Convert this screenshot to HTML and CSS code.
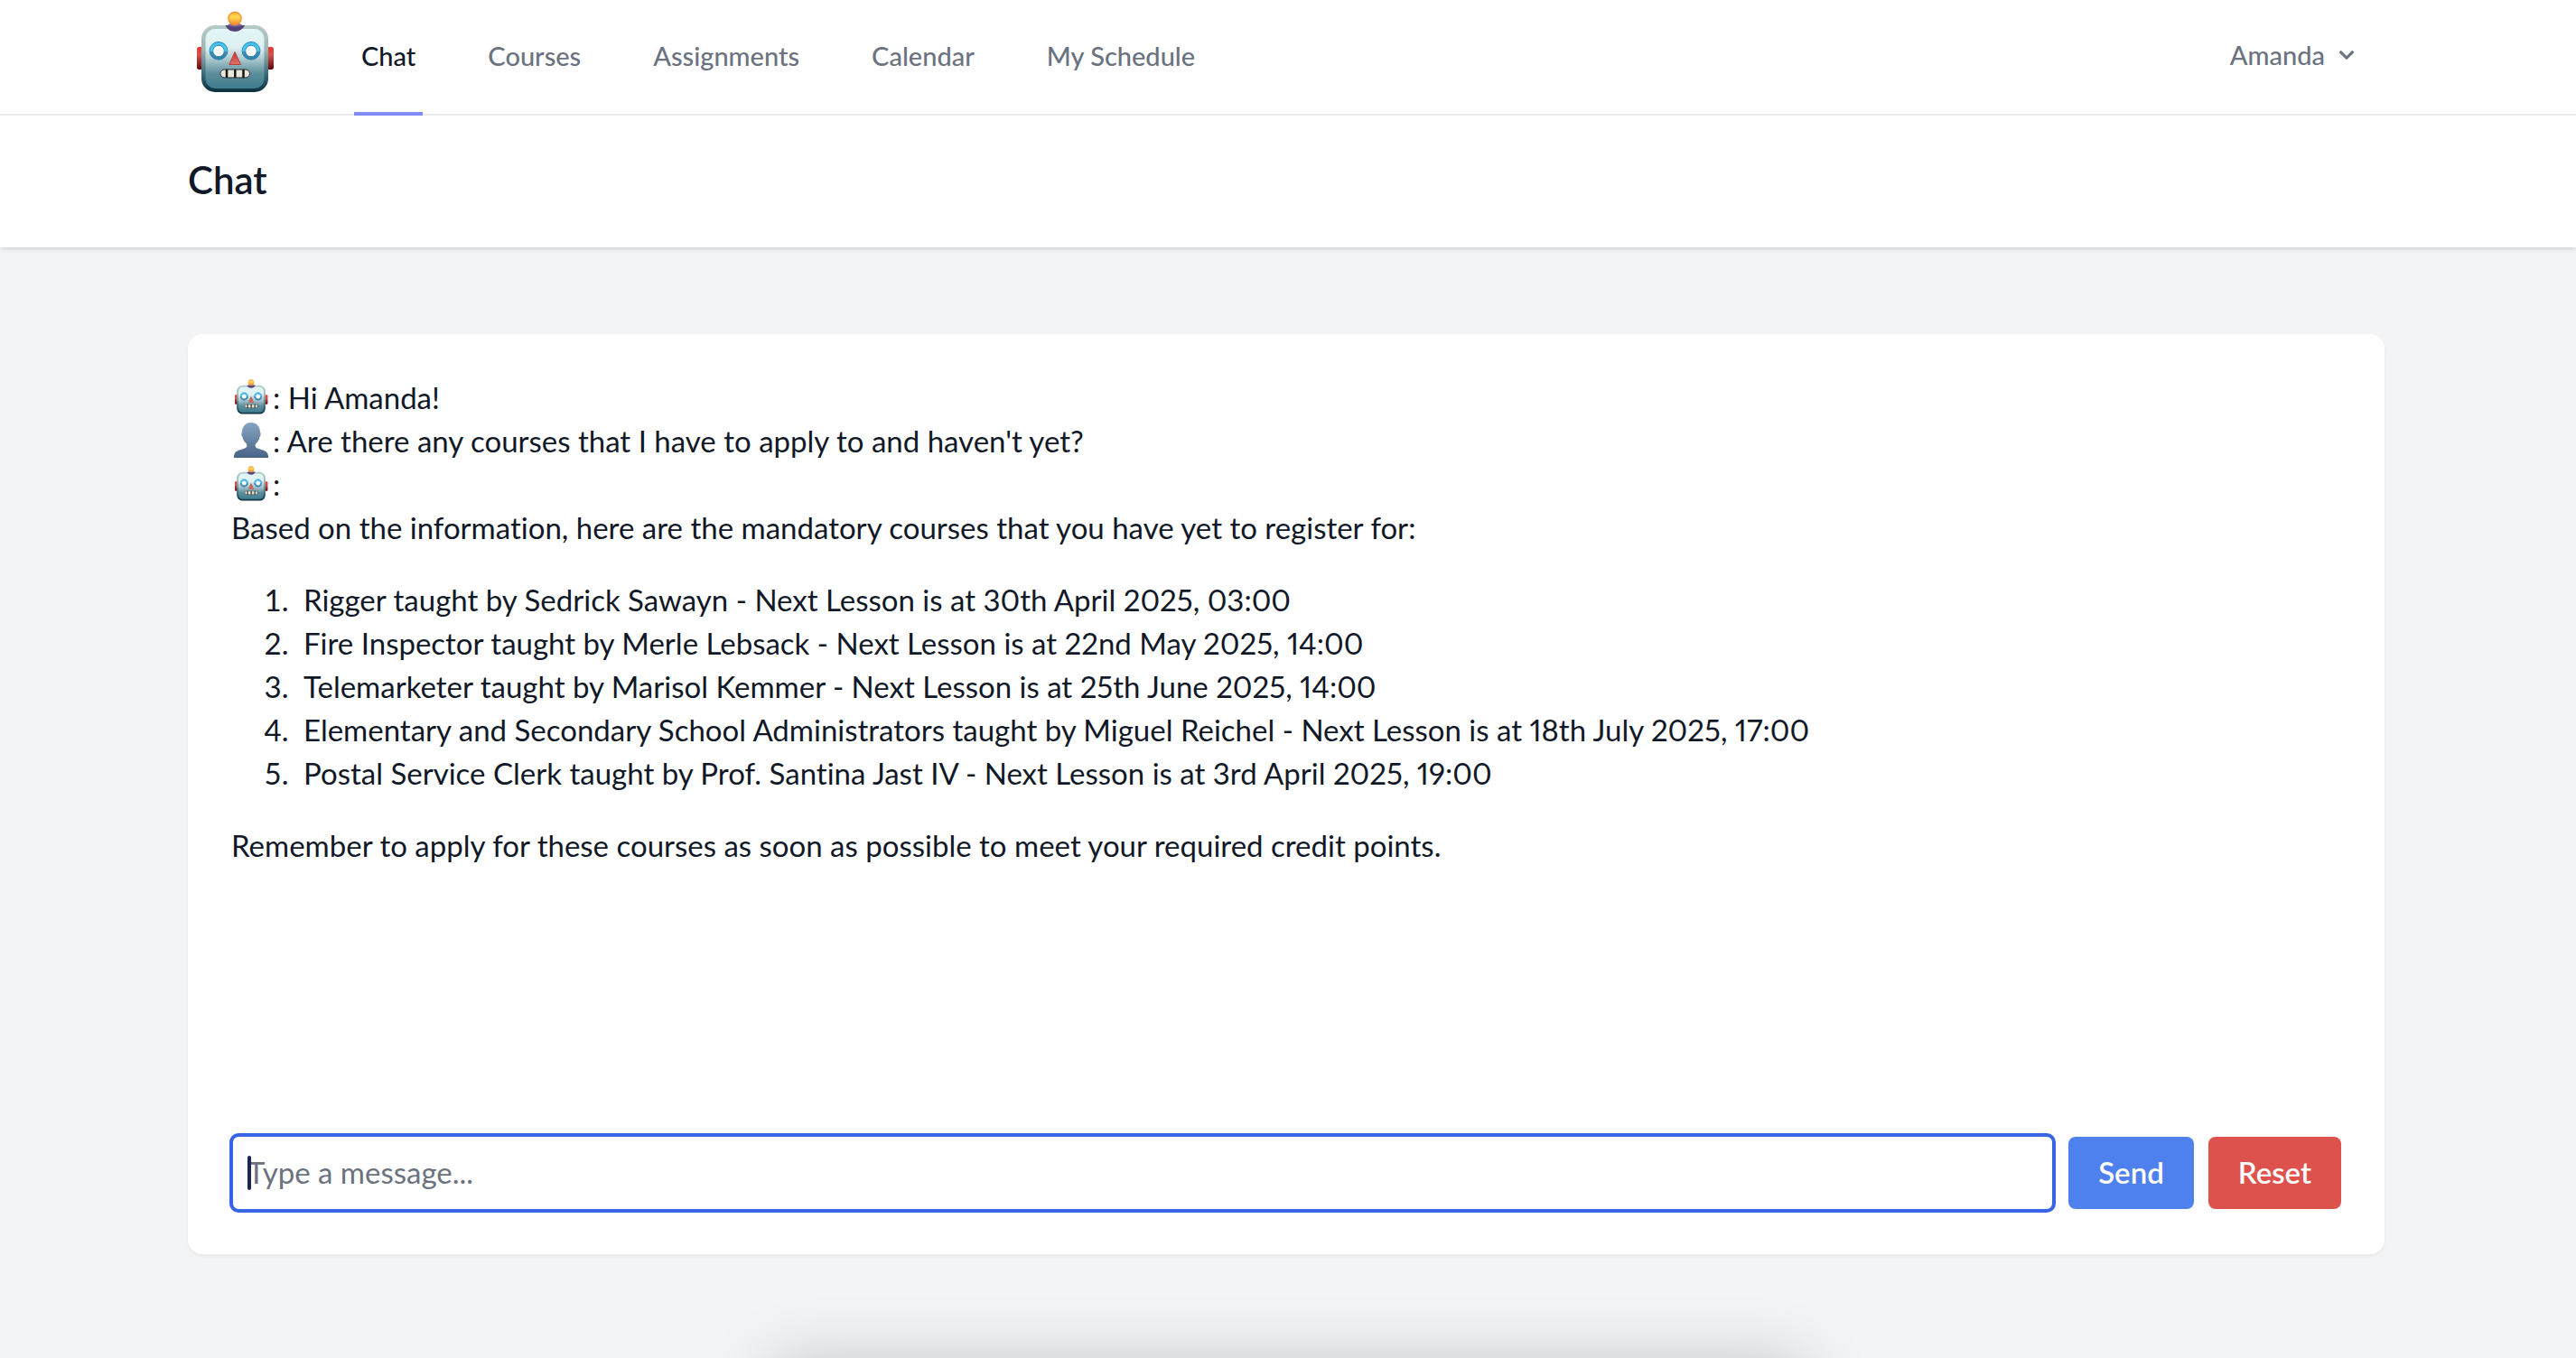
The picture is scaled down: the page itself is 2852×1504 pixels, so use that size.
FILE: index.html
```html
<!DOCTYPE html>
<html lang="en">
<head>
<meta charset="utf-8">
<meta name="viewport" content="width=device-width, initial-scale=1">
<title>Chat</title>
<link rel="stylesheet" href="styles.css">
</head>
<body>
<svg class="sprite" aria-hidden="true">
  <defs>
    <linearGradient id="face" x1="0" y1="0" x2="0" y2="1">
      <stop offset="0" stop-color="#e2f6f7"/><stop offset=".3" stop-color="#dff0f2"/><stop offset=".48" stop-color="#b4cfd4"/><stop offset=".75" stop-color="#5b8d9a"/><stop offset="1" stop-color="#3e7d8f"/>
    </linearGradient>
    <linearGradient id="rim" x1="0" y1="0" x2="0" y2="1">
      <stop offset="0" stop-color="#b5cbc6"/><stop offset=".35" stop-color="#9db7b5"/><stop offset=".7" stop-color="#3f6f7d"/><stop offset="1" stop-color="#0c303e"/>
    </linearGradient>
    <linearGradient id="ear" x1="0" y1="0" x2="0" y2="1">
      <stop offset="0" stop-color="#e8372f"/><stop offset=".35" stop-color="#d4534b"/><stop offset="1" stop-color="#5d0808"/>
    </linearGradient>
    <linearGradient id="ball" x1="0" y1="0" x2="0" y2="1">
      <stop offset="0" stop-color="#fbb03a"/><stop offset=".4" stop-color="#ffd84f"/><stop offset="1" stop-color="#f4852b"/>
    </linearGradient>
    <linearGradient id="eye" x1="0" y1="0" x2="0" y2="1">
      <stop offset="0" stop-color="#3dbdf0"/><stop offset=".5" stop-color="#4fd2f5"/><stop offset=".55" stop-color="#3f8fb2"/><stop offset="1" stop-color="#2d7fa6"/>
    </linearGradient>
    <linearGradient id="nose" x1="0" y1="0" x2="0" y2="1">
      <stop offset="0" stop-color="#d9322c"/><stop offset="1" stop-color="#d8736c"/>
    </linearGradient>
    <linearGradient id="person" x1="0" y1="0" x2="0" y2="1">
      <stop offset="0" stop-color="#86a5c2"/><stop offset="1" stop-color="#486386"/>
    </linearGradient>
  </defs>
  <symbol id="robot" viewBox="26 12 86 91">
    <rect x="27" y="52" width="8" height="25" rx="2.5" fill="url(#ear)"/>
    <rect x="104" y="52" width="8" height="25" rx="2.5" fill="url(#ear)"/>
    <rect x="32" y="28" width="74" height="74" rx="15" fill="url(#rim)"/>
    <rect x="36.500" y="32" width="65" height="66" rx="11" fill="url(#face)"/>
    <path d="M58.500 28 L80 28 C78 32 74 35 69 35 C64 35 60 32 58.500 28Z" fill="#54417a"/>
    <path d="M61 28 C63 25 75 25 77.500 28 C74 30 64 30 61 28Z" fill="#7b66a0"/>
    <circle cx="69" cy="20.500" r="7.200" fill="url(#ball)" stroke="#f08c2c" stroke-width="1.200"/>
    <g stroke="#2f86b2" stroke-width="1">
      <circle cx="51" cy="56.300" r="9.900" fill="url(#eye)"/>
      <circle cx="87" cy="56.300" r="9.900" fill="url(#eye)"/>
      <circle cx="51" cy="56.500" r="6.300" fill="#fff"/>
      <circle cx="87" cy="56.500" r="6.300" fill="#fff"/>
    </g>
    <path d="M69 57.500 L62.800 71.500 H75.600Z" fill="url(#nose)" stroke="#b5413d" stroke-width="1" stroke-linejoin="round"/>
    <rect x="53" y="77" width="32.500" height="9" rx="4.500" fill="#e9e6da" stroke="#2a2c2c" stroke-width="1"/>
    <path d="M60 77v9M69.300 77v9M78.500 77v9" stroke="#151515" stroke-width="2.500"/>
  </symbol>
  <symbol id="user" viewBox="0 0 118 118">
    <path d="M59 0C78 0 89 13 89 31C92 33 92 44 88 48C86 60 80 67 74 72C71 80 74 84 80 86L103 94C113 98 117 106 117 118H1C1 106 5 98 15 94L38 86C44 84 47 80 44 72C38 67 32 60 30 48C26 44 26 33 29 31C29 13 40 0 59 0Z" fill="url(#person)"/>
  </symbol>
</svg>

<nav class="nav" aria-label="Main">
  <div class="container nav-row">
    <a class="logo" href="#" aria-label="Home"><svg class="logo-icon" aria-hidden="true"><use href="#robot"/></svg></a>
    <div class="nav-links">
      <a class="nav-link active" href="#" aria-current="page">Chat</a>
      <a class="nav-link" href="#">Courses</a>
      <a class="nav-link" href="#">Assignments</a>
      <a class="nav-link" href="#">Calendar</a>
      <a class="nav-link" href="#">My Schedule</a>
    </div>
    <button class="account" type="button" aria-haspopup="true">Amanda
      <svg class="chevron" viewBox="0 0 20 20" fill="currentColor" aria-hidden="true"><path fill-rule="evenodd" clip-rule="evenodd" d="M5.293 7.293a1 1 0 011.414 0L10 10.586l3.293-3.293a1 1 0 111.414 1.414l-4 4a1 1 0 01-1.414 0l-4-4a1 1 0 010-1.414z"/></svg>
    </button>
  </div>
</nav>

<header class="page-header">
  <div class="container"><h1 class="page-title">Chat</h1></div>
</header>

<main class="main">
  <div class="container">
    <section class="card">
      <div class="messages">
        <p class="message"><svg class="avatar" role="img" aria-label="Robot"><use href="#robot"/></svg>: Hi Amanda!</p>
        <p class="message"><svg class="avatar" role="img" aria-label="User"><use href="#user"/></svg>: Are there any courses that I have to apply to and haven't yet?</p>
        <p class="message"><svg class="avatar" role="img" aria-label="Robot"><use href="#robot"/></svg>:</p>
        <p>Based on the information, here are the mandatory courses that you have yet to register for:</p>
        <ol class="course-list">
          <li>Rigger taught by Sedrick Sawayn - Next Lesson is at 30th April 2025, 03:00</li>
          <li>Fire Inspector taught by Merle Lebsack - Next Lesson is at 22nd May 2025, 14:00</li>
          <li>Telemarketer taught by Marisol Kemmer - Next Lesson is at 25th June 2025, 14:00</li>
          <li>Elementary and Secondary School Administrators taught by Miguel Reichel - Next Lesson is at 18th July 2025, 17:00</li>
          <li>Postal Service Clerk taught by Prof. Santina Jast IV - Next Lesson is at 3rd April 2025, 19:00</li>
        </ol>
        <p>Remember to apply for these courses as soon as possible to meet your required credit points.</p>
      </div>
      <form class="composer">
        <div class="field">
          <input class="message-input" type="text" placeholder="Type a message..." aria-label="Message">
          <span class="caret"></span>
        </div>
        <button class="button send" type="submit">Send</button>
        <button class="button reset" type="reset">Reset</button>
      </form>
    </section>
  </div>
</main>
<div class="dock-shadow"></div>
</body>
</html>
```
FILE: styles.css
```css
*, *::before, *::after { box-sizing: border-box; }

@counter-style spaced-decimal {
  system: extends decimal;
  suffix: ".\2002";
}

body {
  margin: 0;
  min-height: 100vh;
  overflow-x: hidden;
  background: #f3f4f6;
  color: #111827;
  font-family: Lato, "Liberation Sans", sans-serif;
  font-size: 33px;
  font-variant-ligatures: none;
  font-variant-numeric: proportional-nums;
  line-height: 48px;
}

h1, p, ol { margin: 0; }
a { color: inherit; text-decoration: none; }
button, input { font: inherit; }

.sprite { position: absolute; width: 0; height: 0; }

.container {
  max-width: 2560px;
  margin: 0 auto;
  padding: 0 64px;
}

.nav, .page-header, .main { padding-right: 4px; }

.nav {
  background: #fff;
  border-bottom: 2px solid #eeeeef;
}

.nav-row {
  display: flex;
  height: 126px;
}

.logo {
  display: flex;
  width: 104px;
  align-items: center;
  justify-content: center;
  padding-bottom: 12px;
}
.logo-icon { width: 86px; height: 91px; }

.nav-links {
  display: flex;
  gap: 64px;
  margin: 0 auto -2px 80px;
}

.nav-link {
  display: flex;
  align-items: center;
  padding: 0 8px;
  border-bottom: 4px solid transparent;
  color: #6b7280;
  font-size: 29px;
  font-weight: 500;
}
.nav-link.active {
  border-color: #818cf8;
  color: #111827;
}

.account {
  display: flex;
  align-items: center;
  gap: 8px;
  padding: 0 26px 4px;
  border: 0;
  background: none;
  color: #6b7280;
  font-size: 29px;
  font-weight: 500;
}
.chevron { width: 32px; height: 32px; }

.page-header {
  position: relative;
  padding-top: 46px;
  padding-bottom: 50px;
  background: #fff;
  box-shadow: 0 2px 6px rgba(0, 0, 0, .1), 0 2px 4px -2px rgba(0, 0, 0, .1);
}
.page-title {
  font-size: 42px;
  font-weight: 600;
  line-height: 50px;
}

.main { padding-top: 96px; padding-bottom: 96px; }

.card {
  padding: 46px 48px 48px;
  border-radius: 16px;
  background: #fff;
  box-shadow: 0 2px 4px rgba(0, 0, 0, .05);
}

.messages { min-height: 841px; padding-bottom: 32px; }

.message { display: flex; align-items: center; }
.avatar {
  width: 40px;
  height: 39px;
  margin: 0 4px 2px 2px;
}

.course-list {
  margin: 32px 0;
  padding-left: 80px;
  list-style: spaced-decimal;
}

.composer {
  display: flex;
  align-items: center;
  gap: 16px;
}

.field { position: relative; display: flex; flex: 1; }

.message-input {
  width: 100%;
  height: 84px;
  padding: 0 16px 2px;
  border: 2px solid #3864e6;
  border-radius: 8px;
  outline: 0;
  background: #fff;
  box-shadow: 0 0 0 2px #3864e6;
  color: #111827;
}
.message-input::placeholder { color: #6b7280; opacity: 1; }

.caret {
  position: absolute;
  top: 23px;
  left: 18px;
  width: 4px;
  height: 38px;
  border-radius: 2px;
  background: #1b2552;
}

.button {
  padding: 15px 33px 17px;
  border: 0;
  border-radius: 8px;
  color: #fff;
  font-weight: 600;
}
.send { background: #4e81ee; }
.reset { background: #dd524c; }

/* soft shadow rising from the bottom edge of the window */
.dock-shadow {
  position: fixed;
  top: 100%;
  left: 30%;
  right: 30%;
  height: 160px;
  margin-top: 12px;
  box-shadow: 0 0 80px rgba(0, 0, 0, .24);
}
```
